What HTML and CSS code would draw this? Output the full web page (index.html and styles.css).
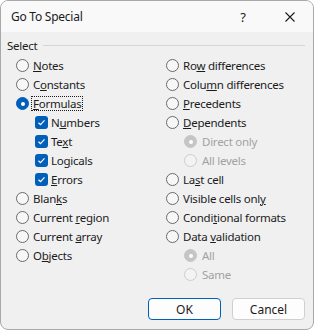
FILE: index.html
```html
<!DOCTYPE html>
<html lang="en">
<head>
    <meta charset="UTF-8">
    <meta name="viewport" content="width=device-width, initial-scale=1.0">
    <title>Go To Special</title>
    <link rel="stylesheet" href="styles.css">
</head>
<body>
    <div class="dialog">
        <div class="titlebar">
            <span class="title">Go To Special</span>
            <span class="help">?</span>
            <span class="close">
                <svg width="10" height="10" viewBox="0 0 10 10"><path d="M0.5 0.5L9.5 9.5M9.5 0.5L0.5 9.5" stroke="#1b1b1b" stroke-width="1.1" fill="none"/></svg>
            </span>
        </div>

        <div class="content">
            <div class="group-head"><span>Select</span><div class="line"></div></div>

            <div class="cols">
                <div class="col">
                    <div class="opt"><span class="radio"></span><span><u>N</u>otes</span></div>
                    <div class="opt"><span class="radio"></span><span>C<u>o</u>nstants</span></div>
                    <div class="opt"><span class="radio on"></span><span class="focus"><u>F</u>ormulas</span></div>
                    <div class="opt sub"><span class="check"><svg width="13" height="13" viewBox="0 0 13 13"><path d="M3.5 6.8L5.5 8.7L9.5 4.3" stroke="#fff" stroke-width="1.2" fill="none"/></svg></span><span>N<u>u</u>mbers</span></div>
                    <div class="opt sub"><span class="check"><svg width="13" height="13" viewBox="0 0 13 13"><path d="M3.5 6.8L5.5 8.7L9.5 4.3" stroke="#fff" stroke-width="1.2" fill="none"/></svg></span><span>Te<u>x</u>t</span></div>
                    <div class="opt sub"><span class="check"><svg width="13" height="13" viewBox="0 0 13 13"><path d="M3.5 6.8L5.5 8.7L9.5 4.3" stroke="#fff" stroke-width="1.2" fill="none"/></svg></span><span>Lo<u>g</u>icals</span></div>
                    <div class="opt sub"><span class="check"><svg width="13" height="13" viewBox="0 0 13 13"><path d="M3.5 6.8L5.5 8.7L9.5 4.3" stroke="#fff" stroke-width="1.2" fill="none"/></svg></span><span><u>E</u>rrors</span></div>
                    <div class="opt"><span class="radio"></span><span>Blan<u>k</u>s</span></div>
                    <div class="opt"><span class="radio"></span><span>Current <u>r</u>egion</span></div>
                    <div class="opt"><span class="radio"></span><span>Current <u>a</u>rray</span></div>
                    <div class="opt"><span class="radio"></span><span>O<u>b</u>jects</span></div>
                </div>
                <div class="col">
                    <div class="opt"><span class="radio"></span><span>Ro<u>w</u> differences</span></div>
                    <div class="opt"><span class="radio"></span><span>Colu<u>m</u>n differences</span></div>
                    <div class="opt"><span class="radio"></span><span><u>P</u>recedents</span></div>
                    <div class="opt"><span class="radio"></span><span><u>D</u>ependents</span></div>
                    <div class="opt sub off"><span class="radio on"></span><span>Direct only</span></div>
                    <div class="opt sub off"><span class="radio"></span><span>All levels</span></div>
                    <div class="opt"><span class="radio"></span><span>La<u>s</u>t cell</span></div>
                    <div class="opt"><span class="radio"></span><span>Visible cells onl<u>y</u></span></div>
                    <div class="opt"><span class="radio"></span><span>Condi<u>t</u>ional formats</span></div>
                    <div class="opt"><span class="radio"></span><span>Data <u>v</u>alidation</span></div>
                    <div class="opt sub off"><span class="radio on"></span><span>All</span></div>
                    <div class="opt sub off"><span class="radio"></span><span>Same</span></div>
                </div>
            </div>

            <div class="buttons">
                <button class="btn default">OK</button>
                <button class="btn">Cancel</button>
            </div>
        </div>
    </div>
</body>
</html>
```

FILE: styles.css
```css
body { margin: 0; font-family: "Noto Sans", "Open Sans", sans-serif; font-size: 11.5px; letter-spacing: -0.25px; color: #1b1b1b; background: #fff; }
.dialog { width: 314px; height: 330px; box-sizing: border-box; border: 1px solid #a9a9a9; border-radius: 8px; overflow: hidden; background: #f0f0f0; display: flex; flex-direction: column; }

.titlebar { height: 31px; background: #f9f9f9; display: flex; align-items: center; padding-left: 10px; flex-shrink: 0; }
.title { font-size: 12px; flex: 1; }
.help { font-size: 13px; width: 44px; text-align: center; margin-right: 2px; }
.close { width: 46px; display: flex; justify-content: center; }
.close svg { display: block; }

.content { flex: 1; display: flex; flex-direction: column; padding: 5px 8px 9px 6px; }
.group-head { display: flex; align-items: center; height: 16px; }
.group-head .line { flex: 1; height: 1px; background: #d6d6d6; margin-left: 6px; margin-top: 1px; }

.cols { display: grid; grid-template-columns: 150px 1fr; margin-top: 3px; padding-left: 9px; }
.opt { height: 19px; display: flex; align-items: center; gap: 4px; white-space: nowrap; }
.opt.sub { padding-left: 18px; }
.col:first-child .opt.sub { padding-left: 19px; gap: 3px; }
.opt.off { color: #a2a2a2; gap: 5px; }

.radio { width: 13px; height: 13px; box-sizing: border-box; border-radius: 50%; border: 1px solid #6a6a6a; background: #f7f7f7; position: relative; flex-shrink: 0; }
.radio.on { background: #005fb8; border-color: #005fb8; }
.radio.on::after { content: ""; position: absolute; left: 3.5px; top: 3.5px; width: 4px; height: 4px; border-radius: 50%; background: #fff; }
.off .radio { border-color: #cdcdcd; background: #f3f3f3; }
.off .radio.on { background: #c5c5c5; border-color: #c5c5c5; }

.check { width: 13px; height: 13px; border-radius: 3px; background: #005fb8; flex-shrink: 0; }
.check svg { display: block; }

.focus { outline: 1px dotted #1b1b1b; outline-offset: 0; padding: 0 1px; margin-left: -1px; line-height: 13px; }

.buttons { margin-top: auto; display: flex; justify-content: flex-end; gap: 11px; }
.btn { width: 73px; height: 22px; box-sizing: border-box; font-family: inherit; font-size: 12px; color: #1b1b1b; background: #fdfdfd; border: 1px solid #d0d0d0; border-radius: 4px; padding: 0; }
.btn.default { border-color: #005fb8; }
```
